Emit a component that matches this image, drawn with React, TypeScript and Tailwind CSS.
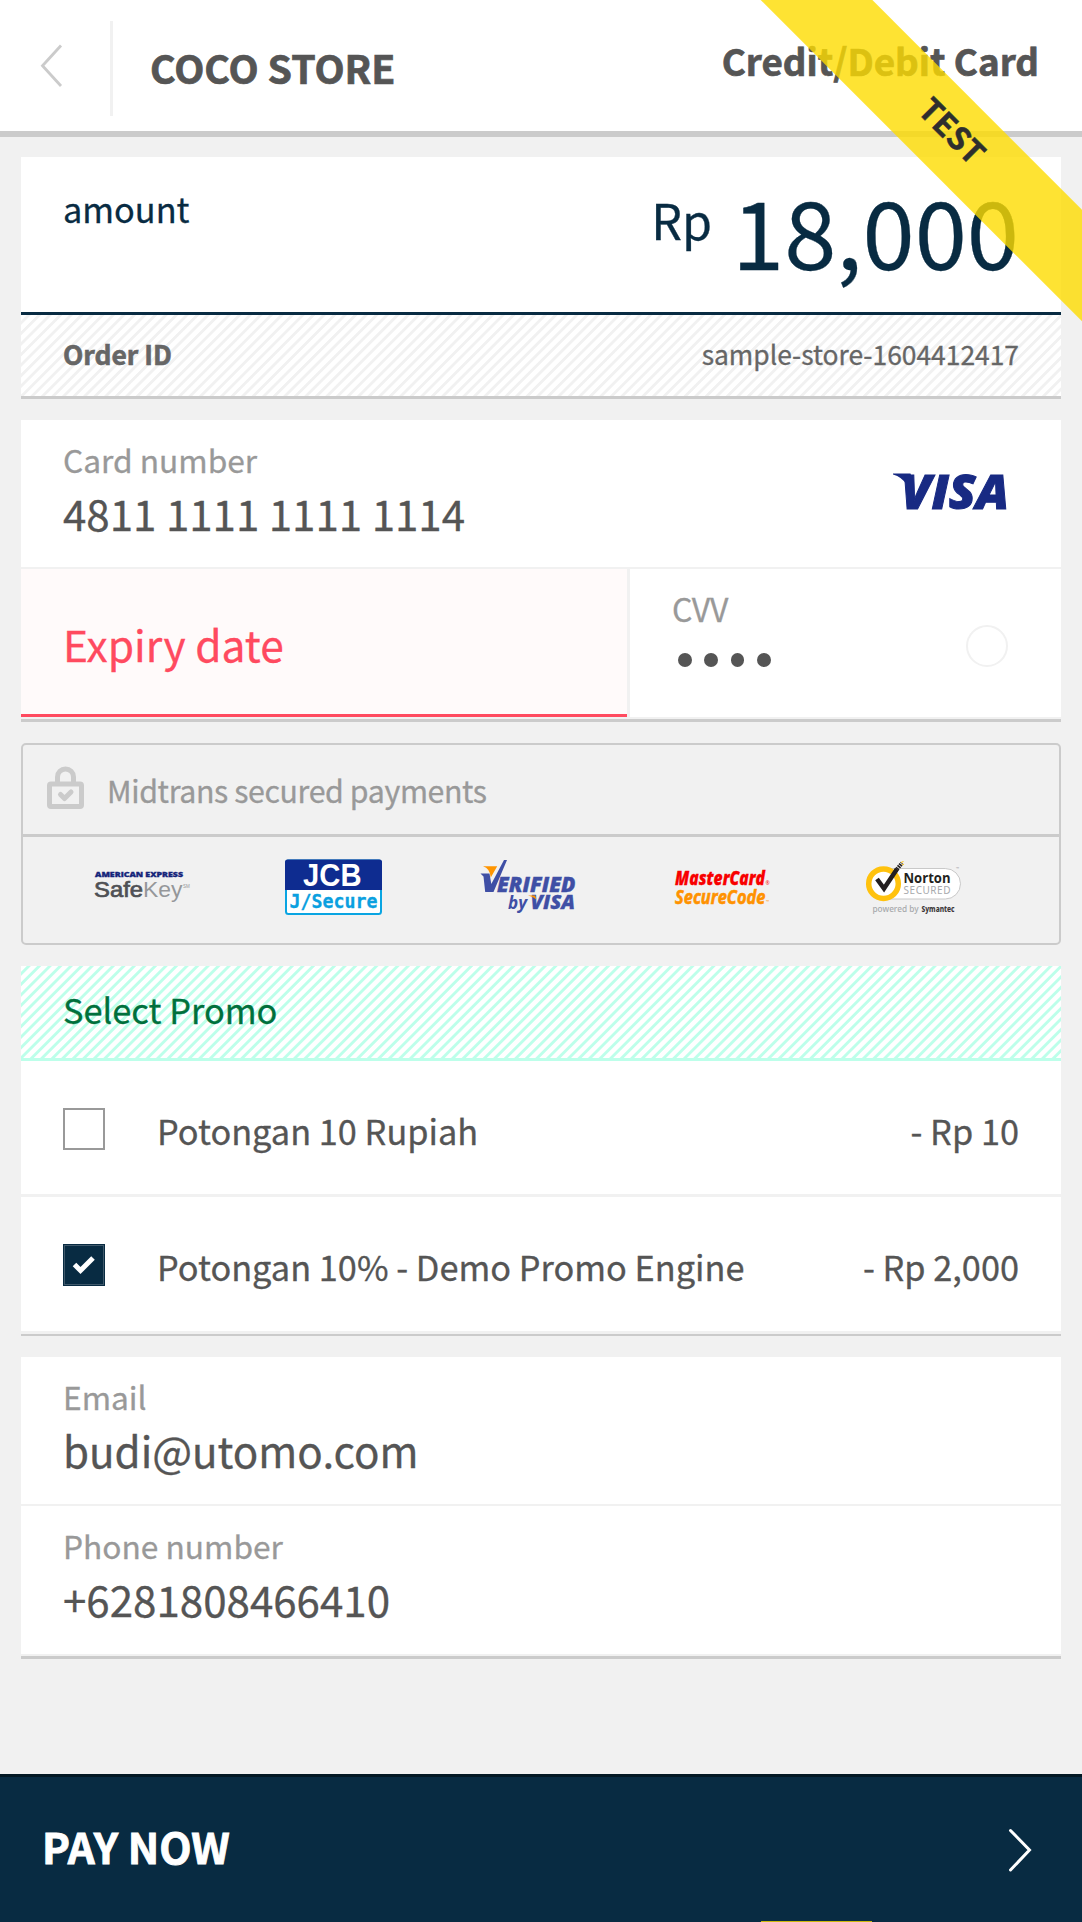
import React from "react";

const CJK = "font-['Noto_Sans_CJK_JP','Noto_Sans_CJK_SC','Noto_Sans',sans-serif]";

function VisaMark() {
  return (
    <svg className="overflow-visible" width="115" height="37" viewBox="0 0 115 37">
      <path d="M0 .5 H17.500 L20 8 L14 12 Q9 4 0 1.5Z" fill="#182a83" />
      <text x="8" y="35.500" fontFamily="Open Sans, sans-serif" fontWeight="800" fontStyle="italic" fontSize="48.500" fill="#182a83" stroke="#182a83" strokeWidth="1" textLength="108" lengthAdjust="spacingAndGlyphs">VISA</text>
    </svg>
  );
}

function LockIcon() {
  return (
    <svg width="38" height="44" viewBox="0 0 38 44" fill="none" stroke="#cbcbcb" strokeWidth="5" strokeLinejoin="round" strokeLinecap="round">
      <path d="M10.500 18V11a8 8 0 0 1 16 0v7" strokeLinecap="butt" />
      <rect x="2.500" y="18" width="32" height="22.500" rx="1.500" />
      <path d="M13.500 28.500l4 4 6.500-6.500" />
    </svg>
  );
}

function SafeKey() {
  return (
    <svg className="overflow-visible" width="97" height="60" viewBox="94 858 97 60">
      <text x="95" y="876.700" fontFamily="Open Sans, sans-serif" fontWeight="800" fontSize="6" fill="#14247a" stroke="#14247a" strokeWidth=".3" textLength="88" lengthAdjust="spacingAndGlyphs">AMERICAN EXPRESS</text>
      <text x="94" y="896.700" fontFamily="Liberation Sans, sans-serif" fontSize="22" fill="#4f5155" stroke="#4f5155" strokeWidth=".7" textLength="49" lengthAdjust="spacingAndGlyphs">Safe</text>
      <text x="143" y="896.700" fontFamily="Liberation Sans, sans-serif" fontSize="22" fill="#95979a" textLength="39.500" lengthAdjust="spacingAndGlyphs">Key</text>
      <text x="183" y="888" fontFamily="Liberation Sans, sans-serif" fontSize="4.500" fill="#95979a">SM</text>
    </svg>
  );
}

function JcbSecure() {
  return (
    <svg className="overflow-visible" width="97" height="60" viewBox="287 858 97 60">
      <rect x="286" y="860.500" width="95" height="53.500" rx="2.500" fill="#fff" stroke="#0aa5e2" strokeWidth="2" />
      <path d="M285 890V862q0-2.500 2.500-2.500H379.500q2.500 0 2.500 2.500V890Z" fill="#0e2c90" />
      <text x="303" y="886" fontFamily="Liberation Sans, sans-serif" fontWeight="700" fontSize="30.500" fill="#fff" textLength="58.500" lengthAdjust="spacingAndGlyphs">JCB</text>
      <text x="289.500" y="908.300" fontFamily="DejaVu Sans Mono, monospace" fontWeight="700" fontSize="19.500" fill="#0aa0e0" stroke="#0aa0e0" strokeWidth=".3" textLength="88" lengthAdjust="spacingAndGlyphs">J/Secure</text>
    </svg>
  );
}

function VerifiedByVisa() {
  return (
    <svg className="overflow-visible" width="97" height="60" viewBox="480 858 97 60">
      <path d="M480.500 873.500h9l1.800 10.500L504 860h3L493.500 892h-8.300L483.500 876.500Z" fill="#3f4fa5" />
      <path d="M483 866.300h14.200L490.800 877.500Q490 868.500 483 866.300Z" fill="#ff9500" />
      <text x="497" y="891.500" fontFamily="Open Sans, sans-serif" fontWeight="800" fontStyle="italic" fontSize="21.500" fill="#3f4fa5" stroke="#3f4fa5" strokeWidth=".4" textLength="78.500" lengthAdjust="spacingAndGlyphs">ERIFIED</text>
      <text x="508" y="909.300" fontFamily="Open Sans, sans-serif" fontWeight="700" fontStyle="italic" fontSize="18.500" fill="#3f4fa5" textLength="19" lengthAdjust="spacingAndGlyphs">by</text>
      <text x="530.500" y="909.300" fontFamily="Open Sans, sans-serif" fontWeight="800" fontStyle="italic" fontSize="19" fill="#3f4fa5" stroke="#3f4fa5" strokeWidth=".3" textLength="44.500" lengthAdjust="spacingAndGlyphs">VISA</text>
      <path d="M528 895.500h7l1.500 4Q533 896.500 528 895.500Z" fill="#ff9500" />
    </svg>
  );
}

function MasterCardSecureCode() {
  return (
    <svg className="overflow-visible" width="97" height="60" viewBox="673 858 97 60">
      <text x="675" y="885" fontFamily="Open Sans, sans-serif" fontWeight="800" fontStyle="italic" fontSize="20" fill="#f80000" stroke="#f80000" strokeWidth=".3" textLength="90" lengthAdjust="spacingAndGlyphs">MasterCard</text>
      <text x="675" y="903.500" fontFamily="Open Sans, sans-serif" fontWeight="700" fontStyle="italic" fontSize="20" fill="#ff9200" stroke="#ff9200" strokeWidth=".6" textLength="90.500" lengthAdjust="spacingAndGlyphs">SecureCode</text>
      <text x="765.500" y="885" fontFamily="Open Sans, sans-serif" fontSize="5" fill="#f80000">®</text>
      <text x="766" y="903" fontFamily="Open Sans, sans-serif" fontSize="4" fill="#ff9200">™</text>
    </svg>
  );
}

function Norton() {
  return (
    <svg className="overflow-visible" width="97" height="60" viewBox="866 858 97 60">
      <rect x="870" y="868.500" width="90.500" height="30.500" rx="15.200" fill="#fff" stroke="#c9c9c9" />
      <circle cx="883.500" cy="883.700" r="14.800" fill="#fff" stroke="#ffc20e" strokeWidth="5.500" />
      <path d="M877 879L884 888.500L897 869" fill="none" stroke="#231f20" strokeWidth="4.500" />
      <path d="M895.500 871L902 863" stroke="#231f20" strokeWidth="4" strokeDasharray="1.600 .8" />
      <path d="M901 862.500l2.500-1M902 865l1.800-.8" stroke="#ffc20e" strokeWidth="1" />
      <text x="903.500" y="883.300" fontFamily="Open Sans, sans-serif" fontWeight="700" fontSize="15" fill="#231f20" textLength="47" lengthAdjust="spacingAndGlyphs">Norton</text>
      <text x="903.500" y="894.200" fontFamily="Noto Sans, sans-serif" fontSize="10" fill="#a7a9ac" textLength="47" lengthAdjust="spacing">SECURED</text>
      <text x="956" y="870" fontFamily="Noto Sans, sans-serif" fontSize="4" fill="#a7a9ac">™</text>
      <text x="872.500" y="911.500" fontFamily="Noto Sans, sans-serif" fontWeight="500" fontSize="8" fill="#a7a9ac" textLength="46" lengthAdjust="spacingAndGlyphs">powered by</text>
      <text x="921.500" y="911.500" fontFamily="Noto Sans, sans-serif" fontWeight="800" fontSize="8" fill="#3b3738" textLength="33" lengthAdjust="spacingAndGlyphs">Symantec</text>
    </svg>
  );
}

function Field({ label, value, className }: { label: string; value: string; className: string }) {
  return (
    <div className={"pl-[42px] pt-[19px] [-webkit-text-stroke:0.3px_currentColor] " + className}>
      <div className="text-[31.700px] leading-[40px] text-[#999]">{label}</div>
      <div className="mt-[8.500px] text-[42.100px] leading-[50px] text-[#555]">{value}</div>
    </div>
  );
}

function Promo({ name, amount, checked = false }: { name: string; amount: string; checked?: boolean }) {
  return (
    <div className="flex px-[42px] text-[34.350px] leading-[40px] text-[#555] [-webkit-text-stroke:0.3px_currentColor]">
      {checked ? (
        <div className="mt-[47px] size-[42px] bg-[#082b42] p-px">
          <div className="flex size-full items-center justify-center border border-[#40596b]">
            <svg width="24" height="22" viewBox="0 0 24 22" fill="none" stroke="#fff" strokeWidth="5">
              <path d="M2.500 10.500L8.500 16.500L21 4" />
            </svg>
          </div>
        </div>
      ) : (
        <div className="mt-[46.500px] size-[42px] border-2 border-[#999]" />
      )}
      <span className="ml-[52px] mt-[49px]">{name}</span>
      <span className="ml-auto mt-[49px]">{amount}</span>
    </div>
  );
}

export default function App() {
  return (
    <div className={"relative flex h-[1922px] w-[1082px] flex-col overflow-hidden bg-[#f1f1f1] " + CJK}>
      <header className="flex h-[137px] shrink-0 border-b-[6px] border-[#cbcbcb] bg-white">
        <svg className="ml-10 mt-[43px]" width="24" height="45" viewBox="0 0 24 45" fill="none" stroke="#cbcbcb" strokeWidth="2.800">
          <path d="M21 2.500L2.500 22.700L21 43" />
        </svg>
        <div className="ml-[46px] mt-[21px] h-[95px] w-[3px] bg-[#f1f1f1]" />
        <h1 className="ml-[37px] mt-[47px] text-[39.200px] font-bold leading-[40px] text-[#555] [-webkit-text-stroke:0.7px_#555]">COCO STORE</h1>
        <h2 className="ml-auto mr-[43px] mt-[40px] text-[36.800px] font-bold leading-[40px] text-[#555] [-webkit-text-stroke:0.7px_#555]">Credit/Debit Card</h2>
      </header>

      <main className="flex flex-1 flex-col px-[21px] pt-5">
        <section className="flex h-[242px] flex-col border-b-[3px] border-[#cbcbcb] bg-white">
          <div className="flex h-[158px] border-b-[3px] border-[#082b42] px-[42px] text-[#082b42] [-webkit-text-stroke:0.3px_currentColor]">
            <span className="mt-[31px] text-[34.300px] leading-[40px]">amount</span>
            <span className="ml-auto mt-[32px] text-[48.500px] leading-[60px]">Rp</span>
            <span className="ml-[20px] mt-[22px] text-[94px] leading-[100px]">18,000</span>
          </div>
          <div className="flex flex-1 justify-between bg-[repeating-linear-gradient(135deg,#fff_0px,#fff_3.800px,#f1f1f1_4.600px,#f1f1f1_6.600px,#fff_7.450px)] px-[42px] pt-6 text-[26.400px] leading-[30px] text-[#666]">
            <b className="[-webkit-text-stroke:0.6px_#666]">Order ID</b>
            <span className="[-webkit-text-stroke:0.3px_#666]">sample-store-1604412417</span>
          </div>
        </section>

        <section className="mt-[21px] flex h-[302px] flex-col border-b-[3px] border-[#cbcbcb] bg-white">
          <div className="flex h-[149px] justify-between border-b-2 border-[#f1f1f1]">
            <Field label="Card number" value="4811 1111 1111 1114" className="" />
            <div className="mr-[53px] mt-[53px]"><VisaMark /></div>
          </div>
          <div className="flex h-[150px] border-b-2 border-[#f1f1f1] [-webkit-text-stroke:0.3px_currentColor]">
            <div className="w-[606px] border-b-[3px] border-[#ff4a5f] bg-[#fffafa] pl-[42px] pt-[50px] text-[42.500px] leading-[50px] text-[#ff4a5f]">Expiry date</div>
            <div className="flex flex-1 justify-between border-l-[3px] border-[#f1f1f1] pl-[42px] pr-[53px] pt-[19px]">
              <div>
                <div className="text-[32px] leading-[40px] tracking-[-0.5px] text-[#999]">CVV</div>
                <div className="ml-[6px] mt-[25px] flex gap-[12.700px]">
                  {[0, 1, 2, 3].map((i) => (
                    <span key={i} className="size-[13.700px] rounded-full bg-[#555]" />
                  ))}
                </div>
              </div>
              <div className="mt-[37px] size-[42px] rounded-full border-[2.500px] border-[#f1f1f1]" />
            </div>
          </div>
        </section>

        <section className="mt-[21px] h-[202px] rounded-[5px] border-[2.500px] border-[#cbcbcb]">
          <div className="flex h-[92px] border-b-[3px] border-[#cbcbcb] pl-6">
            <div className="mt-[21px]"><LockIcon /></div>
            <span className="ml-[22px] mt-[25px] text-[30.300px] leading-[40px] tracking-[-0.370px] text-[#999] [-webkit-text-stroke:0.3px_#999]">Midtrans secured payments</span>
          </div>
          <div className="flex gap-24 pl-[71px] pt-[21px]">
            <SafeKey />
            <JcbSecure />
            <VerifiedByVisa />
            <MasterCardSecureCode />
            <Norton />
          </div>
        </section>

        <section className="mt-[21px] flex h-[370px] flex-col border-b-[2px] border-[#cbcbcb] bg-white">
          <div className="h-[95px] border-b-[3px] border-[#bdffea] bg-[repeating-linear-gradient(135deg,#fff_0px,#fff_3.600px,#bdffea_4.600px,#bdffea_6.500px,#fff_7.450px)] pl-[42px] pt-[23px] text-[34.400px] leading-[40px] text-[#00703c] [-webkit-text-stroke:0.3px_#00703c]">Select Promo</div>
          <div className="h-[136px] border-b-[3px] border-[#f1f1f1]"><Promo name="Potongan 10 Rupiah" amount="- Rp 10" /></div>
          <div className="h-[137px] border-b-[3px] border-[#f1f1f1]"><Promo name="Potongan 10% - Demo Promo Engine" amount="- Rp 2,000" checked /></div>
        </section>

        <section className="mt-[21px] h-[302px] border-b-[3px] border-[#cbcbcb] bg-white">
          <Field label="Email" value="budi@utomo.com" className="h-[149px] border-b-2 border-[#f1f1f1]" />
          <Field label="Phone number" value="+6281808466410" className="h-[150px] border-b-2 border-[#f1f1f1]" />
        </section>
      </main>

      <footer className="flex h-[148px] shrink-0 justify-between border-t-[3px] border-[#031824] bg-[#082b42] pl-[42px] pr-[50px]">
        <span className="mt-[44px] text-[42px] font-bold leading-[50px] text-white [-webkit-text-stroke:0.9px_#fff]">PAY NOW</span>
        <svg className="mt-[50px]" width="24" height="46" viewBox="0 0 24 46" fill="none" stroke="#fff" strokeWidth="3" strokeLinecap="round">
          <path d="M2.500 3.500L21.500 23L2.500 43" />
        </svg>
      </footer>

      <div className="pointer-events-none absolute right-0 top-0 h-[330px] w-[330px] overflow-hidden">
        <div className="absolute left-[-135px] top-[91px] flex h-[79px] w-[660px] rotate-45 items-center justify-center bg-[#fedc00]/80 pb-[9px] pl-[8px] text-[31.500px] font-bold leading-none text-[#2e2e2e] [-webkit-text-stroke:0.5px_#2e2e2e]">TEST</div>
      </div>
      <div className="pointer-events-none absolute bottom-0 left-[761px] h-px w-[111px] bg-[#fedc00]/80" />
    </div>
  );
}
